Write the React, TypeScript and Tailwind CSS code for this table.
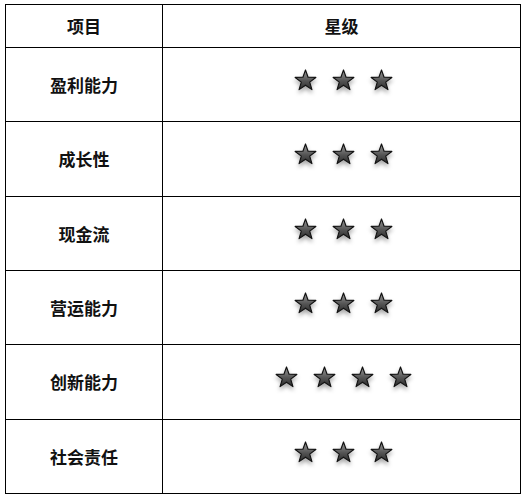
const rows: { name: string; stars: number; h: string }[] = [
  { name: '盈利能力', stars: 3, h: 'h-[74px]' },
  { name: '成长性', stars: 3, h: 'h-[75px]' },
  { name: '现金流', stars: 3, h: 'h-[74px]' },
  { name: '营运能力', stars: 3, h: 'h-[74px]' },
  { name: '创新能力', stars: 4, h: 'h-[75px]' },
  { name: '社会责任', stars: 3, h: 'h-[74px]' },
];

function Star({ id }: { id: string }) {
  return (
    <svg width="23" height="23" viewBox="0 0 24 24" className="drop-shadow-[0_3px_2px_rgba(0,0,0,0.35)]">
      <defs>
        <linearGradient id={id} x1="0" y1="0" x2="0" y2="1">
          <stop offset="0" stopColor="#9a9a9a" />
          <stop offset="0.55" stopColor="#555" />
          <stop offset="1" stopColor="#2a2a2a" />
        </linearGradient>
      </defs>
      <polygon
        points="12,1 14.7,8.6 22.8,8.8 16.4,13.7 18.7,21.5 12,16.9 5.3,21.5 7.6,13.7 1.2,8.8 9.3,8.6"
        fill={`url(#${id})`}
        stroke="#111"
        strokeWidth="1.2"
        strokeLinejoin="round"
      />
    </svg>
  );
}

export default function App() {
  return (
    <div className="w-[525px] h-[499px] bg-white pt-[4px] pl-[5px] font-['Noto_Sans_CJK_SC','Noto_Sans',sans-serif] font-bold text-[17px] text-[#111]">
      <table className="w-[516px] border-collapse">
        <tbody>
          <tr className="h-[43px]">
            <td className="w-[157px] border border-black text-center">项目</td>
            <td className="border border-black text-center">星级</td>
          </tr>
          {rows.map((r, i) => (
            <tr key={r.name} className={r.h}>
              <td className="border border-black text-center">{r.name}</td>
              <td className="border border-black">
                <div className="flex justify-center gap-[15px] pl-[3px] mb-[9px]">
                  {Array.from({ length: r.stars }).map((_, j) => (
                    <Star key={j} id={`g${i}-${j}`} />
                  ))}
                </div>
              </td>
            </tr>
          ))}
        </tbody>
      </table>
    </div>
  );
}
